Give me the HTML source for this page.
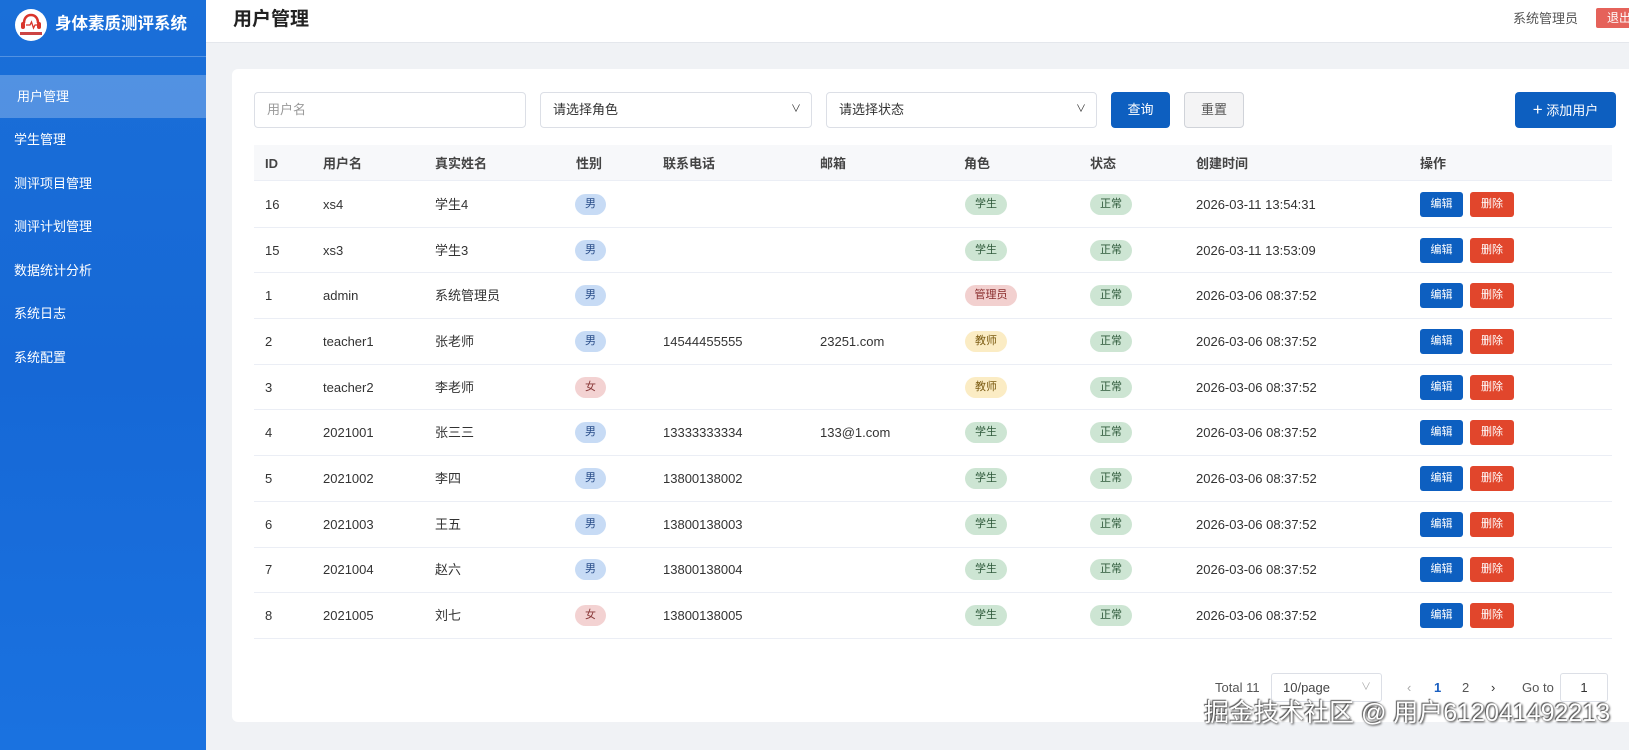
<!DOCTYPE html>
<html><head><meta charset="utf-8"><style>
*{box-sizing:border-box;margin:0;padding:0}
body{width:1629px;height:750px;overflow:hidden;background:#f0f2f5;font-family:"Liberation Sans","Noto Sans CJK SC",sans-serif;font-size:13px;color:#333;position:relative;line-height:16px}
.side{position:absolute;left:0;top:0;width:206px;height:750px;background:linear-gradient(180deg,#1a6fd8,#1668d6 50%,#1a72e0)}
.logo{position:absolute;left:15px;top:9px;width:32px;height:32px;border-radius:50%;background:#fff;overflow:hidden}
.brand{position:absolute;left:55px;top:12px;color:#fff;font-weight:bold;font-size:16.5px;line-height:24px}
.sline{position:absolute;left:0;top:56px;width:206px;height:1px;background:rgba(255,255,255,.25)}
.mi{position:absolute;left:14px;color:#fff;font-size:13px}
.act{position:absolute;left:0;top:75px;width:206px;height:43px;background:rgba(255,255,255,.25)}
.top{position:absolute;left:206px;top:0;right:0;height:43px;background:#fff;border-bottom:1px solid #e4e7ec}
.title{position:absolute;left:233px;top:8px;font-size:19px;font-weight:bold;color:#222;line-height:24px}
.user{position:absolute;left:1513px;top:11px;font-size:13px;color:#555}
.out{position:absolute;left:1596px;top:8px;width:40px;height:20px;background:#e5625a;color:#fff;font-size:12px;line-height:20px;padding-left:11px;border-radius:2px}
.card{position:absolute;left:232px;top:69px;width:1420px;height:653px;background:#fff;border-radius:6px}
.inp{position:absolute;top:92px;height:36px;border:1px solid #dcdfe6;border-radius:4px;background:#fff;padding:0 12px;font-size:13px;line-height:34px}
.btn{position:absolute;top:92px;height:36px;border-radius:4px;font-size:13px;text-align:center;line-height:36px}
.th{position:absolute;left:254px;top:145px;width:1358px;height:36px;background:#f7f8fa;border-bottom:1px solid #ebeef5}
.c{position:absolute;font-size:13px;color:#333;white-space:nowrap;line-height:16px}
.h{font-weight:bold;color:#444}
.rl{position:absolute;left:254px;width:1358px;height:1px;background:#ebeef5}
.bd{position:absolute;height:21px;border-radius:11px;font-size:11px;line-height:21px;text-align:center}
.m{background:#c7dbf5;color:#2a4e8a;width:31px}
.f{background:#f3d2d2;color:#8a3a3a;width:31px}
.s{background:#cde5d3;color:#2f5a3b;width:42px}
.g{background:#f2d0cf;color:#8a2d2d;width:52px}
.t{background:#fbecc4;color:#7a5a10;width:42px}
.ok{background:#cde5d3;color:#2f5a3b;width:42px}
.eb{position:absolute;left:1420px;width:43px;height:25px;background:#0d5fc0;color:#fff;font-size:11px;text-align:center;line-height:25px;border-radius:3px}
.db{position:absolute;left:1470px;width:44px;height:25px;background:#e1462c;color:#fff;font-size:11px;text-align:center;line-height:25px;border-radius:3px}
.pg{position:absolute;top:680px;font-size:13px;color:#555;line-height:16px}
.wm{position:absolute;left:1204px;top:698px;font-size:25px;line-height:30px;color:#fff;text-shadow:1px 1px 2px #333,-1px -1px 1px #555;white-space:nowrap}
</style></head><body>
<div class="side">
<div class="logo"><svg width="32" height="32" viewBox="0 0 32 32"><path d="M9 14c0-5 3-8 7-8s7 3 7 8" stroke="#d9352b" stroke-width="2.5" fill="none"/><rect x="6" y="13" width="4" height="7" rx="2" fill="#d9352b"/><rect x="22" y="13" width="4" height="7" rx="2" fill="#d9352b"/><path d="M11 16h4l1.5-3 2 6 1.5-3h2" stroke="#d9352b" stroke-width="1.3" fill="none"/><rect x="5" y="23" width="22" height="3" fill="#c44"/></svg></div>
<div class="brand">身体素质测评系统</div>
<div class="sline"></div>
<div class="act"></div>
<div class="mi" style="left:17px;top:89px">用户管理</div>
<div class="mi" style="top:132px">学生管理</div>
<div class="mi" style="top:176px">测评项目管理</div>
<div class="mi" style="top:219px">测评计划管理</div>
<div class="mi" style="top:263px">数据统计分析</div>
<div class="mi" style="top:306px">系统日志</div>
<div class="mi" style="top:350px">系统配置</div>
</div>
<div class="top"></div>
<div class="title">用户管理</div>
<div class="user">系统管理员</div>
<div class="out">退出</div>
<div class="card"></div>
<div class="inp" style="left:254px;width:272px;color:#999">用户名</div>
<div class="inp" style="left:540px;width:272px;color:#333">请选择角色<span style="position:absolute;right:10px;font-size:10px">&#x2228;</span></div>
<div class="inp" style="left:826px;width:271px;color:#333">请选择状态<span style="position:absolute;right:10px;font-size:10px">&#x2228;</span></div>
<div class="btn" style="left:1111px;width:59px;background:#0d5fc0;color:#fff">查询</div>
<div class="btn" style="left:1184px;width:60px;background:#f4f4f5;border:1px solid #d0d3d9;color:#555;line-height:34px">重置</div>
<div class="btn" style="left:1515px;width:101px;background:#0d5fc0;color:#fff"><span style="font-size:17px">+</span> 添加用户</div>
<div class="th"></div>
<div class="c h" style="left:265px;top:156px">ID</div>
<div class="c h" style="left:323px;top:156px">用户名</div>
<div class="c h" style="left:435px;top:156px">真实姓名</div>
<div class="c h" style="left:576px;top:156px">性别</div>
<div class="c h" style="left:663px;top:156px">联系电话</div>
<div class="c h" style="left:820px;top:156px">邮箱</div>
<div class="c h" style="left:964px;top:156px">角色</div>
<div class="c h" style="left:1090px;top:156px">状态</div>
<div class="c h" style="left:1196px;top:156px">创建时间</div>
<div class="c h" style="left:1420px;top:156px">操作</div>
<div class="c" style="left:265px;top:197px">16</div><div class="c" style="left:323px;top:197px">xs4</div><div class="c" style="left:435px;top:197px">学生4</div><div class="bd m" style="left:575px;top:194px">男</div><div class="bd s" style="left:965px;top:194px">学生</div><div class="bd ok" style="left:1090px;top:194px">正常</div><div class="c" style="left:1196px;top:197px">2026-03-11 13:54:31</div><div class="eb" style="top:192px">编辑</div><div class="db" style="top:192px">删除</div><div class="rl" style="top:227px"></div>
<div class="c" style="left:265px;top:243px">15</div><div class="c" style="left:323px;top:243px">xs3</div><div class="c" style="left:435px;top:243px">学生3</div><div class="bd m" style="left:575px;top:240px">男</div><div class="bd s" style="left:965px;top:240px">学生</div><div class="bd ok" style="left:1090px;top:240px">正常</div><div class="c" style="left:1196px;top:243px">2026-03-11 13:53:09</div><div class="eb" style="top:238px">编辑</div><div class="db" style="top:238px">删除</div><div class="rl" style="top:272px"></div>
<div class="c" style="left:265px;top:288px">1</div><div class="c" style="left:323px;top:288px">admin</div><div class="c" style="left:435px;top:288px">系统管理员</div><div class="bd m" style="left:575px;top:285px">男</div><div class="bd g" style="left:965px;top:285px">管理员</div><div class="bd ok" style="left:1090px;top:285px">正常</div><div class="c" style="left:1196px;top:288px">2026-03-06 08:37:52</div><div class="eb" style="top:283px">编辑</div><div class="db" style="top:283px">删除</div><div class="rl" style="top:318px"></div>
<div class="c" style="left:265px;top:334px">2</div><div class="c" style="left:323px;top:334px">teacher1</div><div class="c" style="left:435px;top:334px">张老师</div><div class="bd m" style="left:575px;top:331px">男</div><div class="c" style="left:663px;top:334px">14544455555</div><div class="c" style="left:820px;top:334px">23251.com</div><div class="bd t" style="left:965px;top:331px">教师</div><div class="bd ok" style="left:1090px;top:331px">正常</div><div class="c" style="left:1196px;top:334px">2026-03-06 08:37:52</div><div class="eb" style="top:329px">编辑</div><div class="db" style="top:329px">删除</div><div class="rl" style="top:364px"></div>
<div class="c" style="left:265px;top:380px">3</div><div class="c" style="left:323px;top:380px">teacher2</div><div class="c" style="left:435px;top:380px">李老师</div><div class="bd f" style="left:575px;top:377px">女</div><div class="bd t" style="left:965px;top:377px">教师</div><div class="bd ok" style="left:1090px;top:377px">正常</div><div class="c" style="left:1196px;top:380px">2026-03-06 08:37:52</div><div class="eb" style="top:375px">编辑</div><div class="db" style="top:375px">删除</div><div class="rl" style="top:409px"></div>
<div class="c" style="left:265px;top:425px">4</div><div class="c" style="left:323px;top:425px">2021001</div><div class="c" style="left:435px;top:425px">张三三</div><div class="bd m" style="left:575px;top:422px">男</div><div class="c" style="left:663px;top:425px">13333333334</div><div class="c" style="left:820px;top:425px">133@1.com</div><div class="bd s" style="left:965px;top:422px">学生</div><div class="bd ok" style="left:1090px;top:422px">正常</div><div class="c" style="left:1196px;top:425px">2026-03-06 08:37:52</div><div class="eb" style="top:420px">编辑</div><div class="db" style="top:420px">删除</div><div class="rl" style="top:455px"></div>
<div class="c" style="left:265px;top:471px">5</div><div class="c" style="left:323px;top:471px">2021002</div><div class="c" style="left:435px;top:471px">李四</div><div class="bd m" style="left:575px;top:468px">男</div><div class="c" style="left:663px;top:471px">13800138002</div><div class="bd s" style="left:965px;top:468px">学生</div><div class="bd ok" style="left:1090px;top:468px">正常</div><div class="c" style="left:1196px;top:471px">2026-03-06 08:37:52</div><div class="eb" style="top:466px">编辑</div><div class="db" style="top:466px">删除</div><div class="rl" style="top:501px"></div>
<div class="c" style="left:265px;top:517px">6</div><div class="c" style="left:323px;top:517px">2021003</div><div class="c" style="left:435px;top:517px">王五</div><div class="bd m" style="left:575px;top:514px">男</div><div class="c" style="left:663px;top:517px">13800138003</div><div class="bd s" style="left:965px;top:514px">学生</div><div class="bd ok" style="left:1090px;top:514px">正常</div><div class="c" style="left:1196px;top:517px">2026-03-06 08:37:52</div><div class="eb" style="top:512px">编辑</div><div class="db" style="top:512px">删除</div><div class="rl" style="top:547px"></div>
<div class="c" style="left:265px;top:562px">7</div><div class="c" style="left:323px;top:562px">2021004</div><div class="c" style="left:435px;top:562px">赵六</div><div class="bd m" style="left:575px;top:559px">男</div><div class="c" style="left:663px;top:562px">13800138004</div><div class="bd s" style="left:965px;top:559px">学生</div><div class="bd ok" style="left:1090px;top:559px">正常</div><div class="c" style="left:1196px;top:562px">2026-03-06 08:37:52</div><div class="eb" style="top:557px">编辑</div><div class="db" style="top:557px">删除</div><div class="rl" style="top:592px"></div>
<div class="c" style="left:265px;top:608px">8</div><div class="c" style="left:323px;top:608px">2021005</div><div class="c" style="left:435px;top:608px">刘七</div><div class="bd f" style="left:575px;top:605px">女</div><div class="c" style="left:663px;top:608px">13800138005</div><div class="bd s" style="left:965px;top:605px">学生</div><div class="bd ok" style="left:1090px;top:605px">正常</div><div class="c" style="left:1196px;top:608px">2026-03-06 08:37:52</div><div class="eb" style="top:603px">编辑</div><div class="db" style="top:603px">删除</div><div class="rl" style="top:638px"></div>
<div class="pg" style="left:1215px">Total 11</div>
<div style="position:absolute;left:1271px;top:673px;width:111px;height:29px;border:1px solid #dcdfe6;border-radius:3px;font-size:13px;color:#444;padding:0 11px;line-height:27px">10/page<span style="position:absolute;right:10px;color:#aaa;font-size:10px">&#x2228;</span></div>
<div class="pg" style="left:1407px;color:#aaa">‹</div>
<div class="pg" style="left:1434px;color:#1a5fc0;font-weight:bold">1</div>
<div class="pg" style="left:1462px">2</div>
<div class="pg" style="left:1491px;color:#333">›</div>
<div class="pg" style="left:1522px">Go to</div>
<div style="position:absolute;left:1560px;top:673px;width:48px;height:29px;border:1px solid #dcdfe6;border-radius:3px;text-align:center;line-height:27px;font-size:13px">1</div>
<div class="wm">掘金技术社区 @ 用户612041492213</div>
</body></html>
